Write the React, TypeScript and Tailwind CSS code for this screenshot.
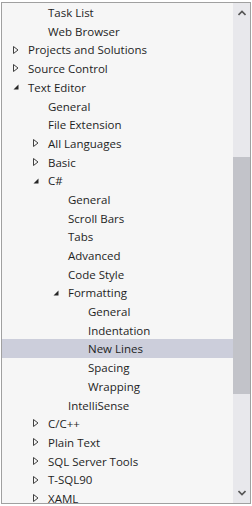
import React from 'react';

type Node = { label: string; level: number; state?: 'open' | 'closed'; selected?: boolean };

const rows: Node[] = [
  { label: 'Task List', level: 1 },
  { label: 'Web Browser', level: 1 },
  { label: 'Projects and Solutions', level: 0, state: 'closed' },
  { label: 'Source Control', level: 0, state: 'closed' },
  { label: 'Text Editor', level: 0, state: 'open' },
  { label: 'General', level: 1 },
  { label: 'File Extension', level: 1 },
  { label: 'All Languages', level: 1, state: 'closed' },
  { label: 'Basic', level: 1, state: 'closed' },
  { label: 'C#', level: 1, state: 'open' },
  { label: 'General', level: 2 },
  { label: 'Scroll Bars', level: 2 },
  { label: 'Tabs', level: 2 },
  { label: 'Advanced', level: 2 },
  { label: 'Code Style', level: 2 },
  { label: 'Formatting', level: 2, state: 'open' },
  { label: 'General', level: 3 },
  { label: 'Indentation', level: 3 },
  { label: 'New Lines', level: 3, selected: true },
  { label: 'Spacing', level: 3 },
  { label: 'Wrapping', level: 3 },
  { label: 'IntelliSense', level: 2 },
  { label: 'C/C++', level: 1, state: 'closed' },
  { label: 'Plain Text', level: 1, state: 'closed' },
  { label: 'SQL Server Tools', level: 1, state: 'closed' },
  { label: 'T-SQL90', level: 1, state: 'closed' },
  { label: 'XAML', level: 1, state: 'closed' },
];

const Glyph = ({ state }: { state?: 'open' | 'closed' }) => {
  if (state === 'closed') {
    return (
      <svg width="6" height="8" viewBox="0 0 6 8" className="block">
        <path d="M0.5 0.5 L5 4 L0.5 7.5 Z" fill="none" stroke="#404040" strokeWidth="1" />
      </svg>
    );
  }
  if (state === 'open') {
    return (
      <svg width="6" height="6" viewBox="0 0 6 6" className="block">
        <path d="M5.5 0.5 L5.5 5.5 L0.5 5.5 Z" fill="#262626" />
      </svg>
    );
  }
  return null;
};

const Row = ({ node }: { node: Node }) => (
  <div
    className={`flex items-center h-[18.7px] whitespace-nowrap ${node.selected ? 'bg-[#cccedb]' : ''}`}
    style={{ paddingLeft: 6 + node.level * 20 }}
  >
    <div className="w-5 flex-none flex items-center pl-[5px]">
      <Glyph state={node.state} />
    </div>
    <span className="text-[11.5px] leading-none text-[#1e1e1e] pt-[1px]">{node.label}</span>
  </div>
);

const App: React.FC = () => {
  return (
    <div className="w-[252px] h-[506px] bg-white pt-[2px] pl-[1px]">
      <div
        className="w-[250px] h-[502px] border border-[#a0a0a0] bg-[#f6f6f6] flex overflow-hidden"
        style={{ fontFamily: '"Open Sans", "Noto Sans", sans-serif' }}
      >
        {/* tree */}
        <div className="flex-1 min-w-0 overflow-hidden">
          {rows.map((n, i) => (
            <Row key={i} node={n} />
          ))}
        </div>

        {/* scrollbar */}
        <div className="w-[17px] flex-none bg-[#e8e8ec] flex flex-col">
          <div className="h-[20px] flex items-center justify-center">
            <svg width="8" height="6" viewBox="0 0 8 6">
              <path d="M0.5 5 L4 1.5 L7.5 5" fill="none" stroke="#555" strokeWidth="1.6" />
            </svg>
          </div>
          <div className="h-[134px]" />
          <div className="h-[237px] bg-[#c2c3c9]" />
          <div className="flex-1" />
          <div className="h-[20px] flex items-center justify-center">
            <svg width="8" height="6" viewBox="0 0 8 6">
              <path d="M0.5 1 L4 4.5 L7.5 1" fill="none" stroke="#555" strokeWidth="1.6" />
            </svg>
          </div>
        </div>
      </div>
    </div>
  );
};

export default App;
